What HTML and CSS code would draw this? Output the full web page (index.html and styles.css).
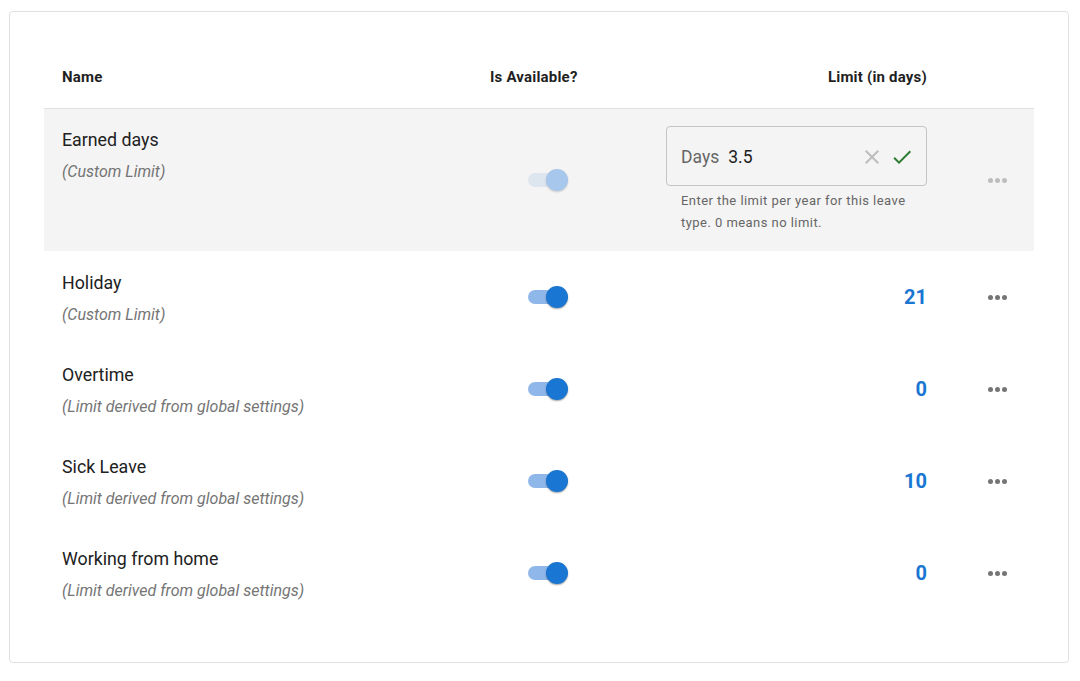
FILE: index.html
```html
<!DOCTYPE html>
<html lang="en">
<head>
<meta charset="utf-8">
<title>Leave types</title>
<link rel="stylesheet" href="styles.css">
</head>
<body>
<div class="card">
  <div class="table">
    <div class="row head">
      <div class="cell c-name">Name</div>
      <div class="cell c-avail">Is Available?</div>
      <div class="cell c-limit">Limit (in days)</div>
      <div class="cell c-act"></div>
    </div>

    <div class="row editing">
      <div class="cell c-name top">
        <div class="title">Earned days</div>
        <div class="sub">(Custom Limit)</div>
      </div>
      <div class="cell c-avail"><span class="switch disabled"><span class="track"></span><span class="thumb"></span></span></div>
      <div class="cell c-limit top">
        <div class="editor">
          <div class="field">
            <span class="adorn">Days</span>
            <span class="value">3.5</span>
            <span class="icons">
              <svg class="ic-x" viewBox="0 0 24 24" width="24" height="24"><path d="M19 6.41L17.59 5 12 10.59 6.41 5 5 6.41 10.59 12 5 17.59 6.41 19 12 13.41 17.59 19 19 17.59 13.41 12z"/></svg>
              <svg class="ic-ok" viewBox="0 0 24 24" width="24" height="24"><path d="M9 16.17L4.83 12l-1.42 1.41L9 19 21 7l-1.41-1.41z"/></svg>
            </span>
          </div>
          <div class="helper">Enter the limit per year for this leave type. 0 means no limit.</div>
        </div>
      </div>
      <div class="cell c-act"><span class="dots disabled"><i></i><i></i><i></i></span></div>
    </div>

    <div class="row">
      <div class="cell c-name">
        <div class="title">Holiday</div>
        <div class="sub">(Custom Limit)</div>
      </div>
      <div class="cell c-avail"><span class="switch"><span class="track"></span><span class="thumb"></span></span></div>
      <div class="cell c-limit"><span class="num">21</span></div>
      <div class="cell c-act"><span class="dots"><i></i><i></i><i></i></span></div>
    </div>

    <div class="row">
      <div class="cell c-name">
        <div class="title">Overtime</div>
        <div class="sub">(Limit derived from global settings)</div>
      </div>
      <div class="cell c-avail"><span class="switch"><span class="track"></span><span class="thumb"></span></span></div>
      <div class="cell c-limit"><span class="num">0</span></div>
      <div class="cell c-act"><span class="dots"><i></i><i></i><i></i></span></div>
    </div>

    <div class="row">
      <div class="cell c-name">
        <div class="title">Sick Leave</div>
        <div class="sub">(Limit derived from global settings)</div>
      </div>
      <div class="cell c-avail"><span class="switch"><span class="track"></span><span class="thumb"></span></span></div>
      <div class="cell c-limit"><span class="num">10</span></div>
      <div class="cell c-act"><span class="dots"><i></i><i></i><i></i></span></div>
    </div>

    <div class="row">
      <div class="cell c-name">
        <div class="title">Working from home</div>
        <div class="sub">(Limit derived from global settings)</div>
      </div>
      <div class="cell c-avail"><span class="switch"><span class="track"></span><span class="thumb"></span></span></div>
      <div class="cell c-limit"><span class="num">0</span></div>
      <div class="cell c-act"><span class="dots"><i></i><i></i><i></i></span></div>
    </div>
  </div>
</div>
</body>
</html>
```

FILE: styles.css
```css
* { box-sizing: border-box; }
html, body { margin: 0; padding: 0; background: #fff; }
body {
  font-family: Roboto, "Liberation Sans", Arial, sans-serif;
  color: #212121;
  padding: 11px 0 0 9px;
}
.card {
  width: 1060px;
  border: 1px solid #e0e0e0;
  border-radius: 4px;
  padding: 34px 34px 43px 34px;
}
.table { display: flex; flex-direction: column; }
.row {
  display: grid;
  grid-template-columns: 430px 156px 315px 88px;
  align-items: center;
  height: 92px;
}
.row.head {
  height: 63px;
  border-bottom: 1px solid #e0e0e0;
  font-size: 15px;
  font-weight: 700;
  letter-spacing: 0.2px;
  color: #1f1f1f;
}
.row.editing { height: 142px; background: #f4f4f4; }
.cell { min-width: 0; }
.c-name { padding-left: 18px; }
.row:not(.head) .c-name { padding-top: 3px; }
.row .c-name.top { align-self: start; padding-top: 19px; }
.head .c-avail { padding-left: 16px; }
.c-limit { display: flex; justify-content: flex-end; padding-right: 18px; }
.c-limit.top { align-self: start; padding-top: 17px; }
.c-act { padding-left: 43px; }

.title { font-size: 17.8px; line-height: 24px; color: #212121; }
.sub { margin-top: 8px; font-size: 16px; line-height: 24px; font-style: italic; color: #757575; }

.switch { position: relative; display: block; width: 41px; height: 22px; margin-left: 54px; }
.switch .track {
  position: absolute; left: 0; top: 4px;
  width: 38px; height: 14px; border-radius: 7px;
  background: #90b7ea;
}
.switch .thumb {
  position: absolute; left: 18px; top: 0;
  width: 22px; height: 22px; border-radius: 50%;
  background: #1976d2;
  box-shadow: 0 1px 2px rgba(0,0,0,0.25), 0 1px 1px rgba(0,0,0,0.14);
}
.switch.disabled .track { background: #dde5ee; }
.switch.disabled .thumb { background: #a7c7ec; box-shadow: 0 1px 2px rgba(0,0,0,0.18); }

.num { font-size: 20px; font-weight: 700; color: #1976d2; line-height: 24px; }

.editor { width: 261px; }
.field {
  display: flex; align-items: center;
  height: 60px;
  border: 1px solid #c4c4c4;
  border-radius: 4px;
  padding: 2px 12px 0 14px;
  font-size: 17.5px;
}
.adorn { color: #666; margin-right: 9px; }
.value { color: #212121; flex: 1; }
.icons { display: flex; gap: 6px; align-items: center; }
.icons svg { display: block; }
.ic-x { fill: #bdbdbd; }
.ic-ok { fill: #2e7d32; }
.helper {
  margin-top: 4px;
  padding: 0 10px 0 15px;
  font-size: 13px;
  line-height: 22px;
  letter-spacing: 0.45px;
  color: #666;
}

.dots { display: flex; gap: 2px; }
.dots i { display: block; width: 5px; height: 5px; border-radius: 50%; background: #757575; }
.dots.disabled i { background: #bdbdbd; }
```
